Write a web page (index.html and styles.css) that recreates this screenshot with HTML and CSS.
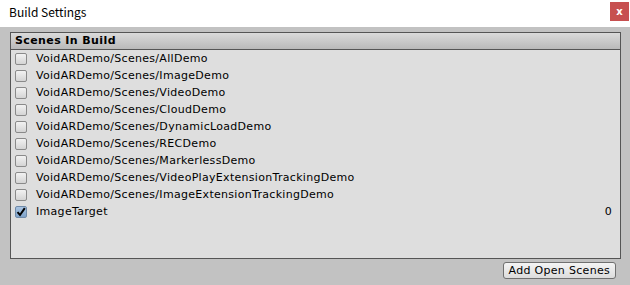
FILE: index.html
```html
<!DOCTYPE html>
<html lang="en">
<head>
    <meta charset="UTF-8">
    <title>Build Settings</title>
    <link rel="stylesheet" href="styles.css">
</head>
<body>
    <div class="titlebar">
        <span class="title">Build Settings</span>
        <button class="close-btn">x</button>
    </div>
    <div class="window">
        <div class="scenes-panel">
            <div class="panel-header">Scenes In Build</div>
            <ul class="scene-list">
                <li class="scene"><span class="check"></span><span class="scene-name">VoidARDemo/Scenes/AllDemo</span></li>
                <li class="scene"><span class="check"></span><span class="scene-name">VoidARDemo/Scenes/ImageDemo</span></li>
                <li class="scene"><span class="check"></span><span class="scene-name">VoidARDemo/Scenes/VideoDemo</span></li>
                <li class="scene"><span class="check"></span><span class="scene-name">VoidARDemo/Scenes/CloudDemo</span></li>
                <li class="scene"><span class="check"></span><span class="scene-name">VoidARDemo/Scenes/DynamicLoadDemo</span></li>
                <li class="scene"><span class="check"></span><span class="scene-name">VoidARDemo/Scenes/RECDemo</span></li>
                <li class="scene"><span class="check"></span><span class="scene-name">VoidARDemo/Scenes/MarkerlessDemo</span></li>
                <li class="scene"><span class="check"></span><span class="scene-name">VoidARDemo/Scenes/VideoPlayExtensionTrackingDemo</span></li>
                <li class="scene"><span class="check"></span><span class="scene-name">VoidARDemo/Scenes/ImageExtensionTrackingDemo</span></li>
                <li class="scene">
                    <span class="check checked">
                        <svg width="10" height="10" viewBox="0 0 10 10"><path d="M1.5 5.2 L4 8 L8.8 1.2" fill="none" stroke="#000" stroke-width="2"/></svg>
                    </span>
                    <span class="scene-name">ImageTarget</span>
                    <span class="scene-index">0</span>
                </li>
            </ul>
        </div>
        <div class="actions">
            <button class="add-btn">Add Open Scenes</button>
        </div>
    </div>
</body>
</html>
```

FILE: styles.css
```css
* {
    margin: 0;
    padding: 0;
    box-sizing: border-box;
}

body {
    width: 630px;
    height: 285px;
    background-color: #c2c2c2;
    font-family: 'DejaVu Sans', Verdana, sans-serif;
    font-size: 11px;
    letter-spacing: 0.3px;
    color: #000;
    overflow: hidden;
}

.titlebar {
    height: 27px;
    background-color: #fff;
    display: flex;
    align-items: center;
    justify-content: space-between;
    padding: 0 1px 0 9px;
}

.title {
    font-family: 'Noto Sans CJK SC', 'Noto Sans', sans-serif;
    font-size: 12px;
    letter-spacing: 0;
    color: #000;
    margin-top: -4px;
}

.close-btn {
    width: 19px;
    height: 19px;
    margin-top: -4px;
    background-color: #c75050;
    color: #fff;
    border: none;
    font-family: 'DejaVu Sans', sans-serif;
    font-size: 10px;
    font-weight: bold;
    line-height: 19px;
}

.window {
    padding: 5px 9px 0 10px;
}

.scenes-panel {
    height: 227px;
    background-color: #dedede;
    border: 1px solid #555;
}

.panel-header {
    height: 17px;
    padding-left: 4px;
    font-weight: bold;
    font-size: 11px;
    letter-spacing: 0.4px;
    line-height: 16px;
    background: linear-gradient(#dadada, #b9b9b9);
    border-bottom: 1px solid #555;
}

.scene-list {
    list-style: none;
}

.scene {
    height: 17px;
    display: flex;
    align-items: center;
    padding-left: 4px;
    padding-right: 8px;
}

.check {
    width: 12px;
    height: 12px;
    border: 1px solid #8a8a8a;
    border-radius: 2px;
    background: linear-gradient(#f2f2f2, #d4d4d4);
    margin-right: 9px;
    display: flex;
    align-items: center;
    justify-content: center;
}

.check.checked {
    border-color: #6f8aa8;
    background: linear-gradient(#a9c4e2, #7fa2c8);
}

.scene-name {
    flex: 1;
}

.scene-index {
    text-align: right;
}

.actions {
    display: flex;
    justify-content: flex-end;
    padding: 3px 5px 0 0;
}

.add-btn {
    height: 17px;
    padding: 0 5px;
    font-family: 'DejaVu Sans', Verdana, sans-serif;
    font-size: 11px;
    letter-spacing: 0.3px;
    color: #000;
    background: linear-gradient(#f4f4f4, #dcdcdc);
    border: 1px solid #707070;
    border-radius: 3px;
}
```
